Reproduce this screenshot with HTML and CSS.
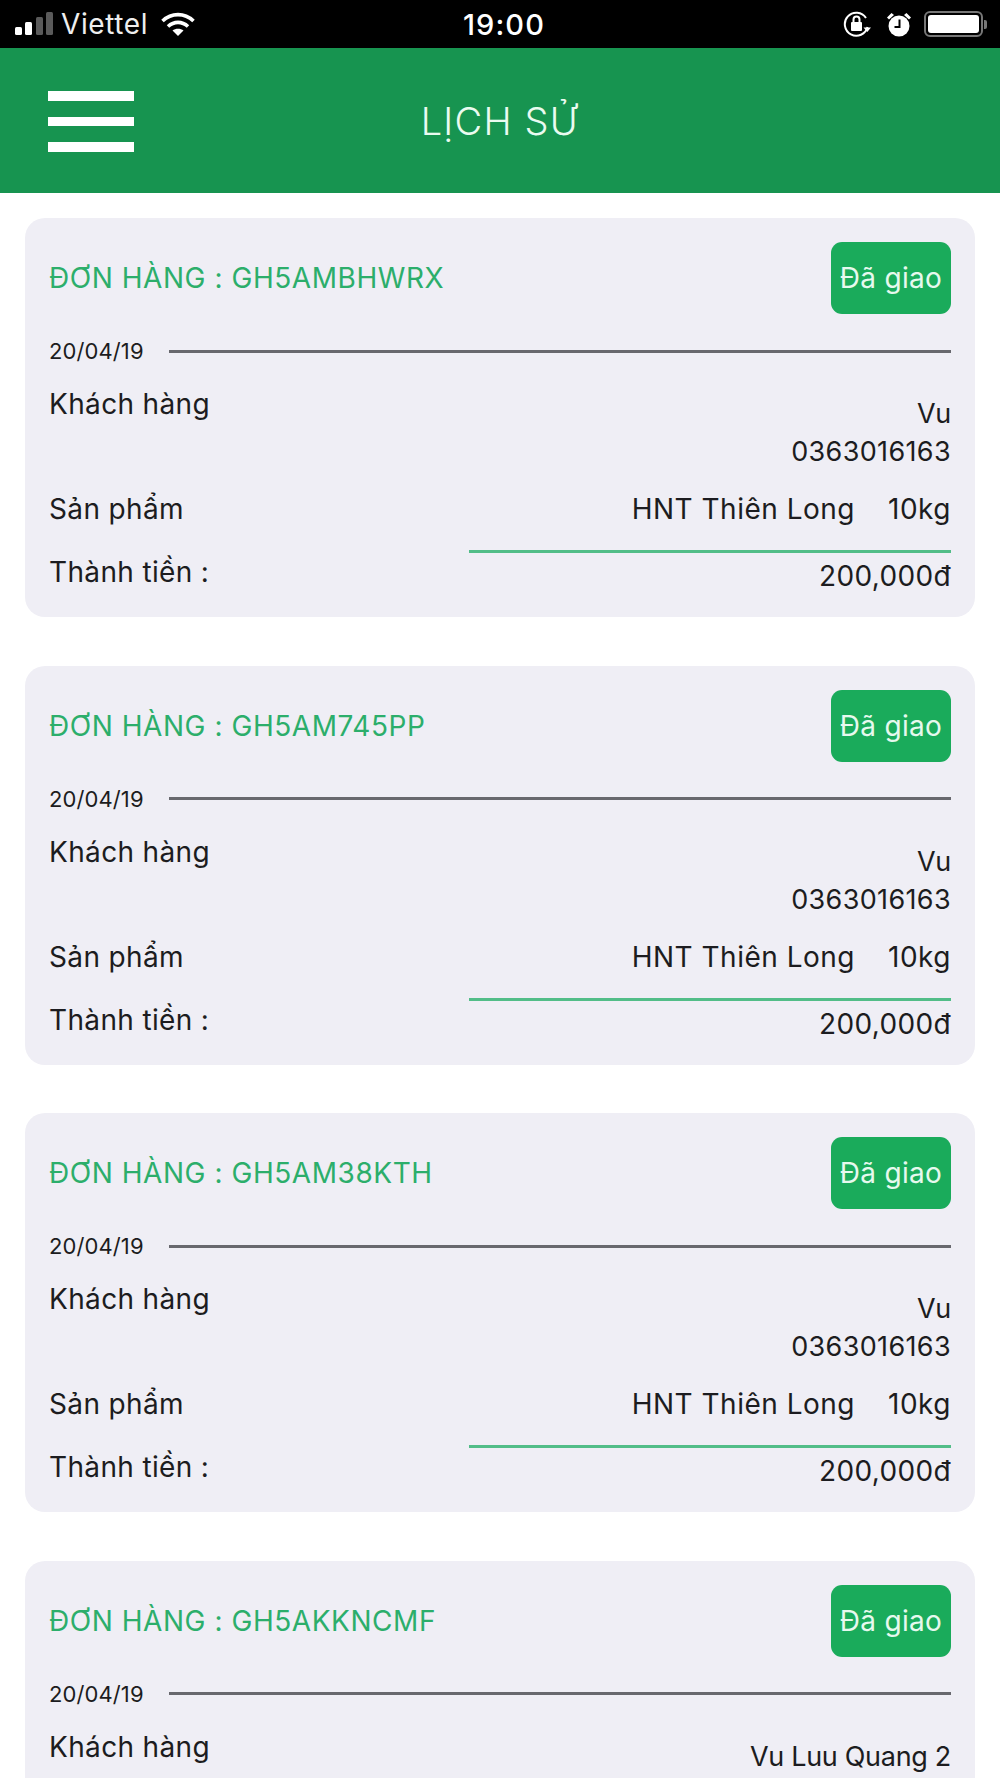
FILE: index.html
```html
<!DOCTYPE html>
<html lang="vi">
<head>
    <meta charset="UTF-8">
    <title>Lịch sử</title>
    <link rel="stylesheet" href="styles.css">
</head>
<body>
    <div class="statusbar">
        <div class="status-left">
            <svg class="signal" width="38" height="24" viewBox="0 0 38 24">
                <rect x="0" y="15" width="7" height="8" rx="1.5" fill="#fff"/>
                <rect x="10" y="10" width="7" height="13" rx="1.5" fill="#fff"/>
                <rect x="21" y="5" width="7" height="18" rx="1.5" fill="#5a5a5a"/>
                <rect x="31" y="0" width="7" height="23" rx="1.5" fill="#5a5a5a"/>
            </svg>
            <span class="carrier">Viettel</span>
            <svg class="wifi" width="34" height="24" viewBox="0 0 34 24" fill="none" stroke="#fff" stroke-width="3.6">
                <path d="M1.5 9C10.5 0.5 23.5 0.5 32.5 9"/>
                <path d="M7 14.5C13 9 21 9 27 14.5"/>
                <path d="M17 24L11.5 18.6C14.5 16 19.5 16 22.5 18.6Z" fill="#fff" stroke="none"/>
            </svg>
        </div>
        <span class="clock">19:00</span>
        <div class="status-right">
            <svg class="lock" width="28" height="26" viewBox="0 0 28 26" fill="none">
                <path d="M24.5 16A11.5 11.5 0 1 1 23 7" stroke="#fff" stroke-width="2"/>
                <path d="M20.5 16.5H28L24.3 21Z" fill="#fff"/>
                <rect x="8" y="11" width="11" height="9" rx="1" fill="#fff"/>
                <path d="M10.5 11V8.5a3 3 0 0 1 6 0V11" stroke="#fff" stroke-width="2"/>
            </svg>
            <svg class="alarm" width="26" height="25" viewBox="0 0 26 25">
                <circle cx="13" cy="14" r="10.5" fill="#fff"/>
                <path d="M1 5.5L5.5 1L8 3L3 7.5Z M25 5.5L20.5 1L18 3L23 7.5Z" fill="#fff"/>
                <path d="M13.5 7.5V15H8.5" fill="none" stroke="#000" stroke-width="2"/>
            </svg>
            <div class="battery">
                <div class="battery-body"><div class="battery-fill"></div></div>
                <div class="battery-cap"></div>
            </div>
        </div>
    </div>

    <div class="header">
        <div class="menu-btn"><span></span><span></span><span></span></div>
        <h1>LỊCH SỬ</h1>
    </div>

    <div class="list">
        <div class="card">
            <div class="card-head">
                <span class="order-code">ĐƠN HÀNG : GH5AMBHWRX</span>
                <span class="badge">Đã giao</span>
            </div>
            <div class="date-row"><span class="date">20/04/19</span><div class="line"></div></div>
            <div class="row row-customer">
                <span class="label">Khách hàng</span>
                <div class="value"><div class="name">Vu</div><div>0363016163</div></div>
            </div>
            <div class="row row-product">
                <span class="label">Sản phẩm</span>
                <div class="value product"><span>HNT Thiên Long</span><span>10kg</span></div>
            </div>
            <div class="green-line"></div>
            <div class="row row-total">
                <span class="label">Thành tiền :</span>
                <div class="value total">200,000đ</div>
            </div>
        </div>

        <div class="card">
            <div class="card-head">
                <span class="order-code">ĐƠN HÀNG : GH5AM745PP</span>
                <span class="badge">Đã giao</span>
            </div>
            <div class="date-row"><span class="date">20/04/19</span><div class="line"></div></div>
            <div class="row row-customer">
                <span class="label">Khách hàng</span>
                <div class="value"><div class="name">Vu</div><div>0363016163</div></div>
            </div>
            <div class="row row-product">
                <span class="label">Sản phẩm</span>
                <div class="value product"><span>HNT Thiên Long</span><span>10kg</span></div>
            </div>
            <div class="green-line"></div>
            <div class="row row-total">
                <span class="label">Thành tiền :</span>
                <div class="value total">200,000đ</div>
            </div>
        </div>

        <div class="card">
            <div class="card-head">
                <span class="order-code">ĐƠN HÀNG : GH5AM38KTH</span>
                <span class="badge">Đã giao</span>
            </div>
            <div class="date-row"><span class="date">20/04/19</span><div class="line"></div></div>
            <div class="row row-customer">
                <span class="label">Khách hàng</span>
                <div class="value"><div class="name">Vu</div><div>0363016163</div></div>
            </div>
            <div class="row row-product">
                <span class="label">Sản phẩm</span>
                <div class="value product"><span>HNT Thiên Long</span><span>10kg</span></div>
            </div>
            <div class="green-line"></div>
            <div class="row row-total">
                <span class="label">Thành tiền :</span>
                <div class="value total">200,000đ</div>
            </div>
        </div>

        <div class="card">
            <div class="card-head">
                <span class="order-code">ĐƠN HÀNG : GH5AKKNCMF</span>
                <span class="badge">Đã giao</span>
            </div>
            <div class="date-row"><span class="date">20/04/19</span><div class="line"></div></div>
            <div class="row row-customer">
                <span class="label">Khách hàng</span>
                <div class="value"><div class="name">Vu Luu Quang 2</div></div>
            </div>
        </div>
    </div>
</body>
</html>
```

FILE: styles.css
```css
:root {
    --header-green: #179450;
    --badge-green: #1aab5b;
    --code-green: #2cae6b;
    --card-bg: #efeef5;
    --text: #1c1c20;
}
html, body {
    height: 1778px;
    overflow: hidden;
}
body {
    font-family: Inter, "Liberation Sans", sans-serif;
    margin: 0;
    background: white;
    color: var(--text);
}
.statusbar {
    height: 48px;
    background: black;
    color: white;
    display: grid;
    grid-template-columns: 1fr auto 1fr;
    align-items: center;
    padding: 0 13px 0 15px;
}
.status-left {
    display: flex;
    align-items: center;
}
.carrier {
    font-size: 28px;
    letter-spacing: 0.6px;
    margin-left: 8px;
    margin-right: 13px;
    color: #eee;
}
.clock {
    font-size: 29px;
    font-weight: 500;
    letter-spacing: 1.1px;
    margin-left: 6px;
}
.status-right {
    display: flex;
    align-items: center;
    justify-content: flex-end;
    gap: 12px;
}
.lock {
    margin-right: 3px;
}
.battery {
    display: flex;
    align-items: center;
}
.battery-body {
    width: 59px;
    height: 26px;
    box-sizing: border-box;
    border: 2px solid #777;
    border-radius: 6px;
    padding: 2px;
}
.battery-fill {
    height: 100%;
    background: white;
    border-radius: 3px;
}
.battery-cap {
    width: 3px;
    height: 9px;
    margin-left: 1px;
    background: #777;
    border-radius: 0 2px 2px 0;
}
.header {
    height: 145px;
    background: var(--header-green);
    display: flex;
    align-items: center;
    justify-content: center;
    position: relative;
}
.header h1 {
    margin: 0;
    font-size: 38px;
    font-weight: 300;
    letter-spacing: 1.2px;
    color: #eafbf0;
}
/* nam tren header, khong anh huong title */
.menu-btn {
    position: absolute;
    left: 48px;
    top: 43px;
    width: 86px;
    display: flex;
    flex-direction: column;
    gap: 16px;
}
.menu-btn span {
    height: 9.5px;
    background: white;
}
.list {
    padding: 25px 25px 0;
}
.card {
    background: var(--card-bg);
    border-radius: 20px;
    height: 399px;
    box-sizing: border-box;
    padding: 24px 24px 0;
    margin-bottom: 48.5px;
}
.card-head {
    display: flex;
    justify-content: space-between;
    align-items: center;
}
.order-code {
    font-size: 28px;
    letter-spacing: 0.55px;
    color: var(--code-green);
}
.badge {
    width: 120px;
    height: 72px;
    line-height: 72px;
    text-align: center;
    border-radius: 11px;
    background: var(--badge-green);
    color: #e6f9ee;
    font-size: 28px;
    letter-spacing: 0.3px;
}
.date-row {
    display: flex;
    align-items: center;
    height: 30px;
    margin-top: 22px;
    gap: 25px;
}
.date {
    font-size: 22px;
    letter-spacing: 0.1px;
}
.line {
    flex: 1;
    height: 3px;
    background: #68686e;
}
.row {
    display: flex;
    justify-content: space-between;
    align-items: flex-start;
    font-size: 28px;
    letter-spacing: 0.35px;
}
.value {
    text-align: right;
}
.row-customer {
    margin-top: 19px;
    height: 105px;
}
.row-customer .label {
    line-height: 38px;
}
.row-customer .value {
    font-size: 27px;
    line-height: 38px;
    padding-top: 10px;
}
.name {
    letter-spacing: -0.3px;
}
.row-product {
    line-height: 38px;
}
.product {
    display: flex;
    gap: 33px;
    letter-spacing: 0.5px;
}
.green-line {
    height: 3px;
    width: 482px;
    margin: 22px 0 0 auto;
    background: #52bd88;
}
.row-total {
    line-height: 38px;
}
.total {
    padding-top: 4px;
}
```
